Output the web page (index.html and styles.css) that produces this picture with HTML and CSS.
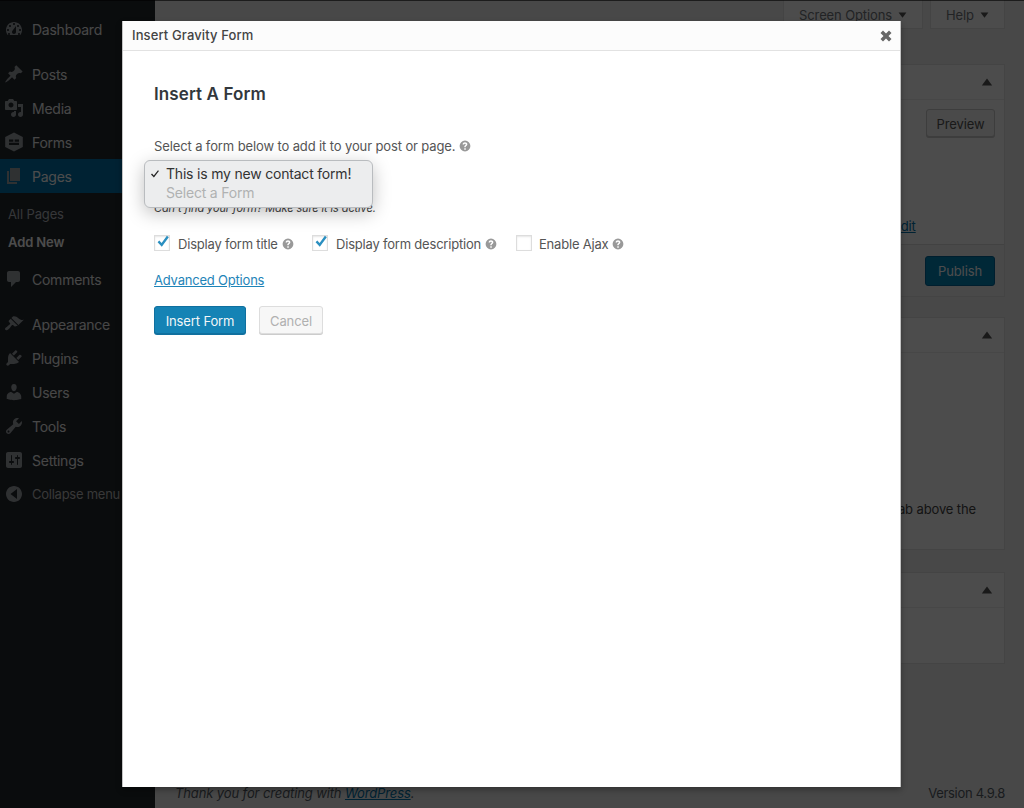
FILE: index.html
```html
<!DOCTYPE html>
<html lang="en">
<head>
<meta charset="utf-8">
<title>Insert Gravity Form</title>
<link rel="stylesheet" href="styles.css">
</head>
<body>
<svg class="sprite" width="0" height="0" aria-hidden="true">
  <symbol id="help" viewBox="0 0 20 20"><path fill-rule="evenodd" d="M10 1a9 9 0 1 1 0 18 9 9 0 0 1 0-18zM8.8 13.6v2.5h2.5v-2.5zM10 3.9c-2.3 0-3.9 1.3-4 3.6h2.5c.1-.9.6-1.4 1.5-1.4.8 0 1.3.4 1.3 1.1 0 .6-.4 1-1 1.5-1.1.8-1.5 1.5-1.5 2.7v.6h2.4v-.4c0-.7.2-1 .9-1.5 1-.7 1.8-1.5 1.8-3 0-2-1.7-3.2-3.9-3.2z"/></symbol>
  <symbol id="check" viewBox="0 0 16 16"><path d="M2.6 8.2l1.7-1.6 2.3 2.5 5.3-7.3 1.9 1.4-7 9.6z"/></symbol>
  <symbol id="up" viewBox="0 0 12 8"><path d="M6 .5l5.2 7H.8z"/></symbol>
  <symbol id="down" viewBox="0 0 12 8"><path d="M.8.5h10.4L6 7.5z"/></symbol>
</svg>

<div class="admin">
  <nav class="sidebar">
    <ul class="menu">
      <li class="item"><svg class="ico" viewBox="0 0 20 20"><path fill-rule="evenodd" d="M3.76 16h12.48c1.1-1.37 1.76-3.11 1.76-5 0-4.42-3.58-8-8-8s-8 3.58-8 8c0 1.89.66 3.63 1.76 5zM10 4c.55 0 1 .45 1 1s-.45 1-1 1-1-.45-1-1 .45-1 1-1zM6 6c.55 0 1 .45 1 1s-.45 1-1 1-1-.45-1-1 .45-1 1-1zm8 0c.55 0 1 .45 1 1s-.45 1-1 1-1-.45-1-1 .45-1 1-1zm-5.37 5.55L12 7v6c0 1.1-.9 2-2 2s-2-.9-2-2c0-.57.24-1.08.63-1.45zM4 10c.55 0 1 .45 1 1s-.45 1-1 1-1-.45-1-1 .45-1 1-1zm12 0c.55 0 1 .45 1 1s-.45 1-1 1-1-.45-1-1 .45-1 1-1zM5 14c.55 0 1 .45 1 1s-.45 1-1 1-1-.45-1-1 .45-1 1-1zm10 0c.55 0 1 .45 1 1s-.45 1-1 1-1-.45-1-1 .45-1 1-1z"/></svg><span>Dashboard</span></li>
      <li class="item item-sep"><svg class="ico" viewBox="0 0 20 20"><path d="M10.44 3.02l1.82-1.82 6.36 6.35-1.83 1.82c-1.05-.68-2.48-.57-3.41.36l-.75.75c-.92.93-1.04 2.35-.35 3.41l-1.83 1.82-2.41-2.41-2.8 2.79c-.42.42-3.38 2.71-3.8 2.29s1.86-3.39 2.28-3.81l2.79-2.79L4.1 9.36l1.83-1.82c1.05.69 2.48.57 3.4-.36l.75-.75c.93-.92 1.05-2.35.36-3.41z"/></svg><span>Posts</span></li>
      <li class="item"><svg class="ico" viewBox="0 0 20 20"><path fill-rule="evenodd" d="M13 11V4c0-.55-.45-1-1-1h-1.67L9 1H5L3.67 3H2c-.55 0-1 .45-1 1v7c0 .55.45 1 1 1h10c.55 0 1-.45 1-1zM7 4.5c1.38 0 2.5 1.12 2.5 2.5S8.38 9.5 7 9.5 4.5 8.38 4.5 7 5.62 4.5 7 4.5zM14 6h5v10.5c0 1.38-1.12 2.5-2.5 2.5S14 17.88 14 16.5s1.12-2.5 2.5-2.5c.17 0 .34.02.5.05V9h-3V6zm-4 8.05V13h2v3.5c0 1.38-1.12 2.5-2.5 2.5S7 17.88 7 16.5 8.12 14 9.5 14c.17 0 .34.02.5.05z"/></svg><span>Media</span></li>
      <li class="item"><svg class="ico" viewBox="0 0 20 20"><path fill-rule="evenodd" stroke-linejoin="round" d="M10 .5L18.800 5v10L10 19.500 1.200 15V5zM5 7.500v2.200h4.300V7.500zM10.700 7.500v2.200H15V7.500zM5 10.800V13h10v-2.200z"/></svg><span>Forms</span></li>
      <li class="item item-active"><svg class="ico" viewBox="0 0 20 20"><path d="M6 15V2h10v13H6zm-1 1h8v2H3V5h2v11z"/></svg><span>Pages</span></li>
      <li class="sub sub-first">All Pages</li>
      <li class="sub sub-current">Add New</li>
      <li class="item item-after"><svg class="ico" viewBox="0 0 20 20"><path d="M5 2h9c1.1 0 2 .9 2 2v7c0 1.100-.9 2-2 2h-2l-5 5v-5H5c-1.100 0-2-.9-2-2V4c0-1.100.9-2 2-2z"/></svg><span>Comments</span></li>
      <li class="item item-sep"><svg class="ico" viewBox="0 0 20 20"><path d="M14.48 11.06L7.41 3.99l1.5-1.5c.5-.56 2.3-.47 3.51.32 1.21.8 1.43 1.28 2.91 2.1 1.18.64 2.45 1.26 4.45.85zm-.71.71L6.7 4.7 4.93 6.47c-.39.39-.39 1.02 0 1.41l1.06 1.06c.39.39.39 1.03 0 1.42-.6.6-1.43 1.11-2.21 1.69-.35.26-.7.53-1.01.84C1.43 13.23.4 14.91 1.36 15.87c.95.95 2.63-.07 3.97-1.41.31-.31.58-.66.85-1.02.57-.78 1.08-1.61 1.69-2.21.39-.39 1.02-.39 1.41 0l1.06 1.06c.39.39 1.02.39 1.41 0z"/></svg><span>Appearance</span></li>
      <li class="item"><svg class="ico" viewBox="0 0 20 20"><path d="M13.11 4.36L9.870 7.6 8 5.730l3.240-3.240c.35-.34 1.050-.2 1.560.32.52.51.66 1.210.31 1.550zm-8 1.770l.91-1.120 9.010 9.010-1.190.84c-.71.71-2.630 1.160-3.820 1.160H6.140L4.900 17.260c-.59.59-1.540.59-2.120 0-.59-.58-.59-1.530 0-2.120l1.240-1.240v-3.880c0-1.130.4-3.190 1.090-3.890zm7.260 3.970l3.240-3.240c.34-.35 1.040-.21 1.550.31.52.51.66 1.210.31 1.550l-3.240 3.250z"/></svg><span>Plugins</span></li>
      <li class="item"><svg class="ico" viewBox="0 0 20 20"><path d="M10 9.250c-2.270 0-2.730-3.440-2.730-3.440C7 4.020 7.820 2 9.970 2c2.160 0 2.980 2.020 2.710 3.810 0 0-.41 3.440-2.680 3.440zm0 2.570L12.720 10c2.390 0 4.520 2.330 4.520 4.530v2.490s-3.650 1.130-7.240 1.130c-3.650 0-7.240-1.130-7.240-1.130v-2.490c0-2.250 1.940-4.480 4.470-4.480z"/></svg><span>Users</span></li>
      <li class="item"><svg class="ico" viewBox="0 0 20 20"><path fill-rule="evenodd" d="M16.680 9.770c-1.340 1.340-3.300 1.670-4.950.99l-5.410 6.520c-.99.99-2.590.99-3.580 0s-.99-2.590 0-3.570l6.520-5.420c-.68-1.650-.35-3.610.99-4.950 1.280-1.280 3.120-1.620 4.720-1.060l-2.890 2.890 2.820 2.820 2.860-2.870c.53 1.580.18 3.390-1.080 4.650zM3.810 16.210c.4.39 1.040.39 1.430 0 .4-.4.4-1.040 0-1.430-.39-.4-1.030-.4-1.430 0-.39.39-.39 1.030 0 1.430z"/></svg><span>Tools</span></li>
      <li class="item"><svg class="ico" viewBox="0 0 20 20"><path fill-rule="evenodd" d="M18 16V4c0-1.100-.9-2-2-2H4c-1.100 0-2 .9-2 2v12c0 1.100.9 2 2 2h12c1.100 0 2-.9 2-2zM8 11h1c.55 0 1 .45 1 1s-.45 1-1 1H8v1.500c0 .28-.22.5-.5.5s-.5-.22-.5-.5V13H6c-.55 0-1-.45-1-1s.45-1 1-1h1V5.500c0-.28.22-.5.5-.5s.5.22.5.5V11zm5-2h-1c-.55 0-1-.45-1-1s.45-1 1-1h1V5.500c0-.28.22-.5.5-.5s.5.22.5.5V7h1c.55 0 1 .45 1 1s-.45 1-1 1h-1v5.500c0 .28-.22.5-.5.5s-.5-.22-.5-.5V9z"/></svg><span>Settings</span></li>
      <li class="item item-collapse"><svg class="ico" viewBox="0 0 20 20"><path fill-rule="evenodd" d="M18 10c0-4.420-3.580-8-8-8s-8 3.580-8 8 3.580 8 8 8 8-3.580 8-8zm-5 5L6.500 10 13 5z"/></svg><span>Collapse menu</span></li>
    </ul>
  </nav>

  <main class="content">
    <div class="screen-tabs">
      <div class="tab">Screen Options<svg class="caret"><use href="#down"/></svg></div>
      <div class="tab">Help<svg class="caret"><use href="#down"/></svg></div>
    </div>
    <div class="columns">
      <section class="panel panel-publish">
        <header class="panel-head"><svg class="caret-up"><use href="#up"/></svg></header>
        <div class="publish-body">
          <div class="preview-row"><span class="btn-preview">Preview</span></div>
          <div class="edit-row"><a class="edit-link">Edit</a></div>
        </div>
        <div class="publish-foot"><span class="btn-publish">Publish</span></div>
      </section>
      <section class="panel panel-attrs">
        <header class="panel-head"><svg class="caret-up"><use href="#up"/></svg></header>
        <p class="panel-note">Need help? Use the Help tab above the</p>
      </section>
      <section class="panel panel-image">
        <header class="panel-head"><svg class="caret-up"><use href="#up"/></svg></header>
      </section>
    </div>
    <footer class="foot">
      <span class="thanks">Thank you for creating with <a class="foot-link">WordPress</a>.</span>
      <span class="version">Version 4.9.8</span>
    </footer>
  </main>
</div>

<div class="backdrop"></div>

<div class="modal">
  <div class="modal-bar">
    <span class="modal-title">Insert Gravity Form</span>
    <svg class="close" viewBox="0 0 14 14"><path d="M4 1.500L7 4.500l3-3L12.500 4l-3 3 3 3-2.500 2.500-3-3-3 3L1.500 10l3-3-3-3z"/></svg>
  </div>
  <div class="modal-body">
    <h3 class="modal-heading">Insert A Form</h3>
    <p class="intro">Select a form below to add it to your post or page. <svg class="help"><use href="#help"/></svg></p>
    <div class="select-wrap">
      <div class="select-box"></div>
      <div class="popup">
        <div class="opt opt-on"><svg class="opt-check" viewBox="0 0 10 10"><path d="M1 5.500l1-1 1.800 2L8 1.200l.9.7-5 6.600z"/></svg>This is my new contact form!</div>
        <div class="opt opt-off">Select a Form</div>
      </div>
    </div>
    <p class="hint">Can't find your form? Make sure it is active.</p>
    <div class="options">
      <label class="option"><span class="cb"><svg class="tick"><use href="#check"/></svg></span>Display form title<svg class="help"><use href="#help"/></svg></label>
      <label class="option"><span class="cb"><svg class="tick"><use href="#check"/></svg></span>Display form description<svg class="help"><use href="#help"/></svg></label>
      <label class="option"><span class="cb"></span>Enable Ajax<svg class="help"><use href="#help"/></svg></label>
    </div>
    <a class="advanced">Advanced Options</a>
    <div class="actions">
      <span class="btn btn-primary">Insert Form</span>
      <span class="btn btn-cancel">Cancel</span>
    </div>
  </div>
</div>
</body>
</html>
```
FILE: styles.css
```css
* { box-sizing: border-box; }
html, body { margin: 0; height: 808px; overflow: hidden; }
body { position: relative; background: #f1f1f1; font-family: Inter, "Liberation Sans", sans-serif; font-size: 13px; letter-spacing: -.12px; color: #444; }
.sprite { position: absolute; }
.admin { display: flex; height: 808px; }

.sidebar { width: 155px; flex: none; background: #23282d; padding-top: 12px; color: #eee; }
.menu { list-style: none; margin: 0; padding: 0; }
.item { display: flex; align-items: center; gap: 8px; height: 34px; padding-left: 4px; font-size: 14px; letter-spacing: -.25px; white-space: nowrap; }
.item-sep { margin-top: 11px; }
.item-active { background: #0073aa; color: #fff; }
.item-after { margin-top: 6px; }
.item-collapse { font-size: 13px; color: #bbb; }
.ico { width: 20px; height: 20px; flex: none; fill: #9ea3a8; }
.sub { height: 28px; padding-left: 8px; line-height: 28px; color: #b4b9be; font-size: 13px; }
.sub-first { margin-top: 7px; }
.sub-current { color: #fff; font-weight: 600; }

.content { flex: 1; min-width: 0; display: flex; flex-direction: column; padding: 0 19px 0 20px; }
.screen-tabs { display: flex; justify-content: flex-end; gap: 7px; height: 29px; }
.tab { display: flex; align-items: center; justify-content: center; gap: 6px; height: 29px; padding: 1px 0 0; background: #fff; border: 1px solid #e5e5e5; border-top: 0; font-size: 13px; line-height: 16px; color: #72777c; white-space: nowrap; }
.tab:first-child { width: 140px; }
.tab:last-child { width: 75px; }
.caret { width: 9px; height: 6px; fill: #555; }

.columns { flex: 1; display: flex; flex-direction: column; align-items: flex-end; padding-top: 35px; }
.panel { width: 280px; background: #fff; border: 1px solid #e5e5e5; }
.panel-head { height: 35px; border-bottom: 1px solid #eee; display: flex; justify-content: flex-end; align-items: center; padding: 0 11px; }
.caret-up { width: 12px; height: 8px; fill: #555; }
.panel-publish { height: 233px; display: flex; flex-direction: column; }
.publish-body { flex: 1; padding: 9px 9px 0; }
.preview-row { display: flex; justify-content: flex-end; }
.btn-preview { width: 69px; height: 28px; line-height: 28px; text-align: center; background: #f7f7f7; border: 1px solid #ccc; border-radius: 3px; box-shadow: 0 1px 0 #ccc; color: #555; }
.edit-row { margin-top: 81px; padding-left: 158px; line-height: 16px; }
.edit-link { color: #0073aa; text-decoration: underline; }
.publish-foot { height: 52px; background: #f5f5f5; border-top: 1px solid #ddd; padding: 11px 9px 0; display: flex; justify-content: flex-end; }
.btn-publish { width: 70px; height: 30px; line-height: 28px; text-align: center; background: #0085ba; border: 1px solid #006799; border-radius: 3px; color: #fff; }
.panel-attrs { height: 233px; margin-top: 20px; }
.panel-note { margin: 146px 28px 0 0; text-align: right; line-height: 20px; white-space: nowrap; }
.panel-image { height: 92px; margin-top: 22px; }

.foot { display: flex; justify-content: space-between; height: 32px; padding-top: 9px; line-height: 16px; color: #555d66; }
.thanks { font-style: italic; }
.version { letter-spacing: -.3px; }
.foot-link { color: #0073aa; text-decoration: underline; }

.backdrop { position: absolute; inset: 0; background: rgba(0, 0, 0, .7); border-top: 1px solid rgba(0, 0, 0, .6); }

.modal { position: absolute; left: 122px; top: 21px; width: 779px; height: 766px; background: #fff; box-shadow: 0 3px 6px rgba(0, 0, 0, .3); border: 1px solid #c4c4c4; border-width: 0 1px 0 1px; }
.modal-bar { display: flex; justify-content: space-between; align-items: center; height: 30px; padding: 0 7px 2px 9px; background: #fcfcfc; border-bottom: 1px solid #e2e2e2; }
.modal-title { font-size: 13px; font-weight: 500; letter-spacing: .12px; color: #444; }
.close { width: 14px; height: 14px; margin-top: 2px; fill: #666; }
.modal-body { padding: 33px 31px 0; }
.modal-heading { margin: 0; font-size: 17px; line-height: 20px; font-weight: 600; letter-spacing: .1px; color: #32373c; }
.intro { display: flex; align-items: center; gap: 4px; margin: 32px 0 0; height: 20px; line-height: 20px; color: #555; }
.help { width: 12px; height: 12px; flex: none; fill: #999; }
.select-wrap { position: relative; height: 28px; margin-top: 4px; }
.select-box { height: 28px; width: 200px; background: #fff; border: 1px solid #5b9dd9; }
.popup { position: absolute; left: -10px; top: 0; width: 229px; height: 48px; padding-top: 3px; background: #ecedee; border: 1px solid #b9bcbf; border-radius: 6px; box-shadow: 0 5px 18px rgba(0, 0, 0, .25); }
.opt { height: 19px; padding-left: 21px; position: relative; font-size: 14px; line-height: 19px; letter-spacing: -.2px; color: #333; white-space: nowrap; }
.opt-off { color: #b0b2b2; }
.opt-check { position: absolute; left: 5px; top: 5px; width: 10px; height: 10px; fill: #222; }
.hint { margin: 13px 0 0; height: 14px; line-height: 14px; font-size: 11px; font-style: italic; color: #444; }
.options { display: flex; align-items: center; margin-top: 19px; height: 20px; }
.option { display: flex; align-items: center; letter-spacing: -.2px; color: #555; white-space: nowrap; }
.option:nth-child(1) { width: 158px; }
.option:nth-child(2) { width: 204px; }
.option:nth-child(3) .cb { margin-right: 7px; }
.option .help { margin-left: 4px; }
.cb { position: relative; width: 16px; height: 16px; margin: -2px 8px 0 0; background: #fff; border: 1px solid #ddd; box-shadow: inset 0 1px 2px rgba(0, 0, 0, .1); }
.tick { position: absolute; left: 0; top: -2px; width: 16px; height: 16px; fill: #2a8fc0; }
.advanced { display: block; margin-top: 17px; line-height: 18px; letter-spacing: -.2px; color: #1e84b8; text-decoration: underline; }
.actions { display: flex; gap: 13px; margin-top: 17px; }
.btn { height: 28px; line-height: 28px; text-align: center; border-radius: 3px; border: 1px solid; }
.btn-primary { width: 92px; background: #1583b5; border-color: #10709f; box-shadow: 0 1px 0 #10709f; color: #f2f6f8; }
.btn-cancel { width: 64px; background: #f7f7f7; border-color: #ddd; box-shadow: 0 1px 0 #ccc; color: #b0b0b0; }
```
